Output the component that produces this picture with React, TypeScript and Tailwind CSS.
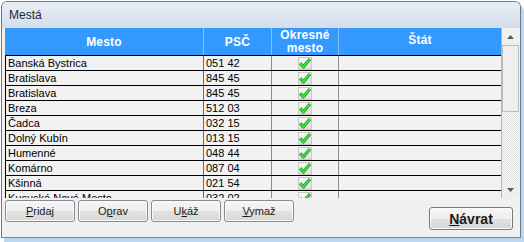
import React from 'react';

const rows: [string, string][] = [
  ['Banská Bystrica', '051 42'],
  ['Bratislava', '845 45'],
  ['Bratislava', '845 45'],
  ['Breza', '512 03'],
  ['Čadca', '032 15'],
  ['Dolný Kubín', '013 15'],
  ['Humenné', '048 44'],
  ['Komárno', '087 04'],
  ['Kšinná', '021 54'],
  ['Kusucké Nové Mesto', '032 02'],
];

function Check() {
  return (
    <svg width="14" height="13" viewBox="0 0 14 13">
      <defs>
        <linearGradient id="cb" x1="0" y1="0" x2="0" y2="1">
          <stop offset="0" stopColor="#fbfbfb" />
          <stop offset="1" stopColor="#dedede" />
        </linearGradient>
      </defs>
      <rect x="0.5" y="0.5" width="13" height="12" fill="url(#cb)" stroke="#c9c9c9" />
      <path d="M2.2 6.2 L5.3 10 L12 2" fill="none" stroke="#1c9e1c" strokeWidth="3.2" strokeLinejoin="round" />
      <path d="M2.2 6.2 L5.3 10 L12 2" fill="none" stroke="#3fe03f" strokeWidth="1.8" strokeLinejoin="round" />
    </svg>
  );
}

function Arrow({ up }: { up?: boolean }) {
  return (
    <svg width="7" height="4" viewBox="0 0 7 4">
      <path d={up ? 'M0 4 L3.5 0 L7 4 Z' : 'M0 0 L3.5 4 L7 0 Z'} fill="#5a5a5a" />
    </svg>
  );
}

function Btn({ children, w = 'w-[70px]' }: { children: React.ReactNode; w?: string }) {
  return (
    <button
      className={`${w} h-[22px] rounded-[3px] border border-[#8a8a8a] bg-[linear-gradient(#f6f6f6_0%,#eeeeee_50%,#e2e2e2_50%,#d6d6d6_100%)] text-[11px] text-[#1a1a1a] leading-none shadow-[inset_0_0_0_1px_#fbfbfb]`}
    >
      {children}
    </button>
  );
}

export default function App() {
  return (
    <div className="w-[524px] h-[242px] bg-white overflow-hidden font-['Liberation_Sans',Arial,sans-serif]">
      <div className="ml-px mt-px w-[520px] h-[237px] rounded-t-[6px] border border-[#6e7885] border-b-[#3c97d8] bg-[#f0f0f0] flex flex-col overflow-hidden shadow-[3px_4px_0_0_#bcd7ef]">
        {/* title */}
        <div className="h-[26px] shrink-0 bg-[linear-gradient(#e8eef6,#d3deeb)] pl-[7px] pt-[6px] text-[12px] leading-[14px] text-[#1b2733]">
          Mestá
        </div>

        {/* grid */}
        <div className="ml-[3px] flex h-[170px] w-[514px] shrink-0">
          <div className="flex w-[496px] flex-col">
            <div className="flex h-[28px] shrink-0 border-b border-black bg-[#3399ff] text-[12px] font-bold tracking-[0.2px] text-white">
              <div className="flex w-[199px] items-center justify-center border-r border-[#86c0fb]">Mesto</div>
              <div className="flex w-[68px] items-center justify-center border-r border-[#86c0fb]">PSČ</div>
              <div className="flex w-[67px] flex-col items-center justify-center border-r border-[#86c0fb] leading-[13px]">
                <span>Okresné</span>
                <span>mesto</span>
              </div>
              <div className="flex w-[162px] items-start justify-center pt-[3px]">Štát</div>
            </div>
            <div className="h-[142px] overflow-hidden bg-[#f2f2f2]">
              {rows.map(([city, psc], i) => (
                <div key={i} className="flex h-[15px] border-b border-black text-[11px] leading-[14px] text-black">
                  <div className="w-[199px] truncate border-r border-l border-[#6a6a6a] border-l-black pl-[2px]">{city}</div>
                  <div className="w-[68px] border-r border-[#8c8c8c] pl-[2px]">{psc}</div>
                  <div className="flex w-[67px] items-center justify-center border-r border-[#8c8c8c]">
                    <Check />
                  </div>
                  <div className="w-[162px]" />
                </div>
              ))}
            </div>
          </div>

          {/* scrollbar */}
          <div className="flex w-[18px] flex-col border-l border-[#b5b5b5] bg-[repeating-conic-gradient(#f7f7f7_0_25%,#e4e4e4_0_50%)] bg-[length:2px_2px]">
            <div className="flex h-[17px] shrink-0 items-center justify-center bg-[#f0f0f0]">
              <Arrow up />
            </div>
            <div className="h-[67px] shrink-0 border border-[#bdbdbd] bg-[#efefef]" />
            <div className="flex-1" />
            <div className="flex h-[17px] shrink-0 items-center justify-center">
              <Arrow />
            </div>
          </div>
        </div>

        {/* buttons */}
        <div className="flex flex-1 items-start justify-between pl-[3px] pr-[7px]">
          <div className="mt-[2px] flex gap-[3px]">
            <Btn>
              <u>P</u>ridaj
            </Btn>
            <Btn>
              O<u>p</u>rav
            </Btn>
            <Btn>
              U<u>k</u>áž
            </Btn>
            <Btn>
              <u>V</u>ymaž
            </Btn>
          </div>
          <button className="mt-[9px] h-[23px] w-[84px] rounded-[3px] border border-[#7a7a7a] bg-[linear-gradient(#f6f6f6_0%,#eeeeee_50%,#e2e2e2_50%,#d6d6d6_100%)] text-[14px] font-bold leading-none text-[#1a1a1a] shadow-[inset_0_0_0_1px_#fbfbfb]">
            <u>N</u>ávrat
          </button>
        </div>
      </div>
    </div>
  );
}
